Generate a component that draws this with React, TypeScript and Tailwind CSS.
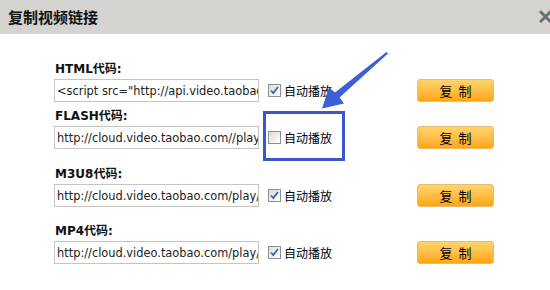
const rows = [
  { label: "HTML代码:", value: '<script src="http://api.video.taobao.com/video/getPlayerJS"></script>', checked: true, gap: "mt-[27px]" },
  { label: "FLASH代码:", value: "http://cloud.video.taobao.com//play/u/0/p/1/e/1/t/1/fv/1.swf", checked: false, gap: "mt-[6px]" },
  { label: "M3U8代码:", value: "http://cloud.video.taobao.com/play/u/0/p/1/e/6/t/1/fv/1.m3u8", checked: true, gap: "mt-[17px]" },
  { label: "MP4代码:", value: "http://cloud.video.taobao.com/play/u/0/p/1/e/6/t/1/fv/1.mp4", checked: true, gap: "mt-[16px]" },
];

function Check({ checked }: { checked: boolean }) {
  return (
    <span className="flex h-[13px] w-[13px] items-center justify-center border border-[#8e8f8f] bg-gradient-to-br from-[#dcdcdc] to-[#ffffff]">
      {checked && (
        <svg width="9" height="9" viewBox="0 0 9 9">
          <path d="M1 4.5 L3.3 7 L8 1" fill="none" stroke="#3f5fb0" strokeWidth="1.8" />
        </svg>
      )}
    </span>
  );
}

export default function App() {
  return (
    <div className="relative h-[290px] w-[550px] overflow-hidden bg-white font-['DejaVu_Sans','Noto_Sans_CJK_SC',sans-serif]">
      {/* Title bar */}
      <div className="flex h-[34px] items-center justify-between bg-[#d4d3d0] pl-[8px]">
        <span className="text-[15px] font-bold text-[#111] font-['Noto_Sans_CJK_SC',sans-serif]">复制视频链接</span>
        <span className="-mr-[4px] text-[20px] font-bold leading-none text-[#6b6b6b] font-['Liberation_Sans',sans-serif]">✕</span>
      </div>

      {/* Code rows */}
      <div className="flex flex-col pl-[54px]">
        {rows.map((r) => (
          <div key={r.label} className={r.gap}>
            <div className="h-[18px] pl-[1px] text-[12px] font-bold leading-[16px] text-[#111]">{r.label}</div>
            <div className="flex items-center">
              <input
                readOnly
                value={r.value}
                className="h-[23px] w-[205px] border border-[#c4c4c4] pl-[2px] text-[11.4px] text-[#222] outline-none font-['DejaVu_Sans',sans-serif]"
              />
              <label className="flex w-[158px] items-center gap-[3px] pl-[9px] text-[12px] text-black font-['Noto_Sans_CJK_SC',sans-serif]">
                <Check checked={r.checked} />
                <span>自动播放</span>
              </label>
              <button className="flex h-[23px] w-[77px] items-center justify-center rounded-[3px] border border-[#e9b97a] bg-gradient-to-b from-[#ffd56a] to-[#ffa600] text-[13px] tracking-[6px] text-black font-['Noto_Sans_CJK_SC',sans-serif]">
                <span className="pl-[6px]">复制</span>
              </button>
            </div>
          </div>
        ))}
      </div>

      {/* Annotation: highlight box and arrow */}
      <div className="absolute left-[263px] top-[111px] h-[50px] w-[82px] border-[3px] border-[#3a57d0]" />
      <svg className="absolute left-0 top-0" width="550" height="290">
        <polygon
          points="386.5,52 388,53.5 339.5,97.5 344,103.5 322,108.5 329,87.5 335,92.5"
          fill="#3a5fd8"
        />
      </svg>
    </div>
  );
}
